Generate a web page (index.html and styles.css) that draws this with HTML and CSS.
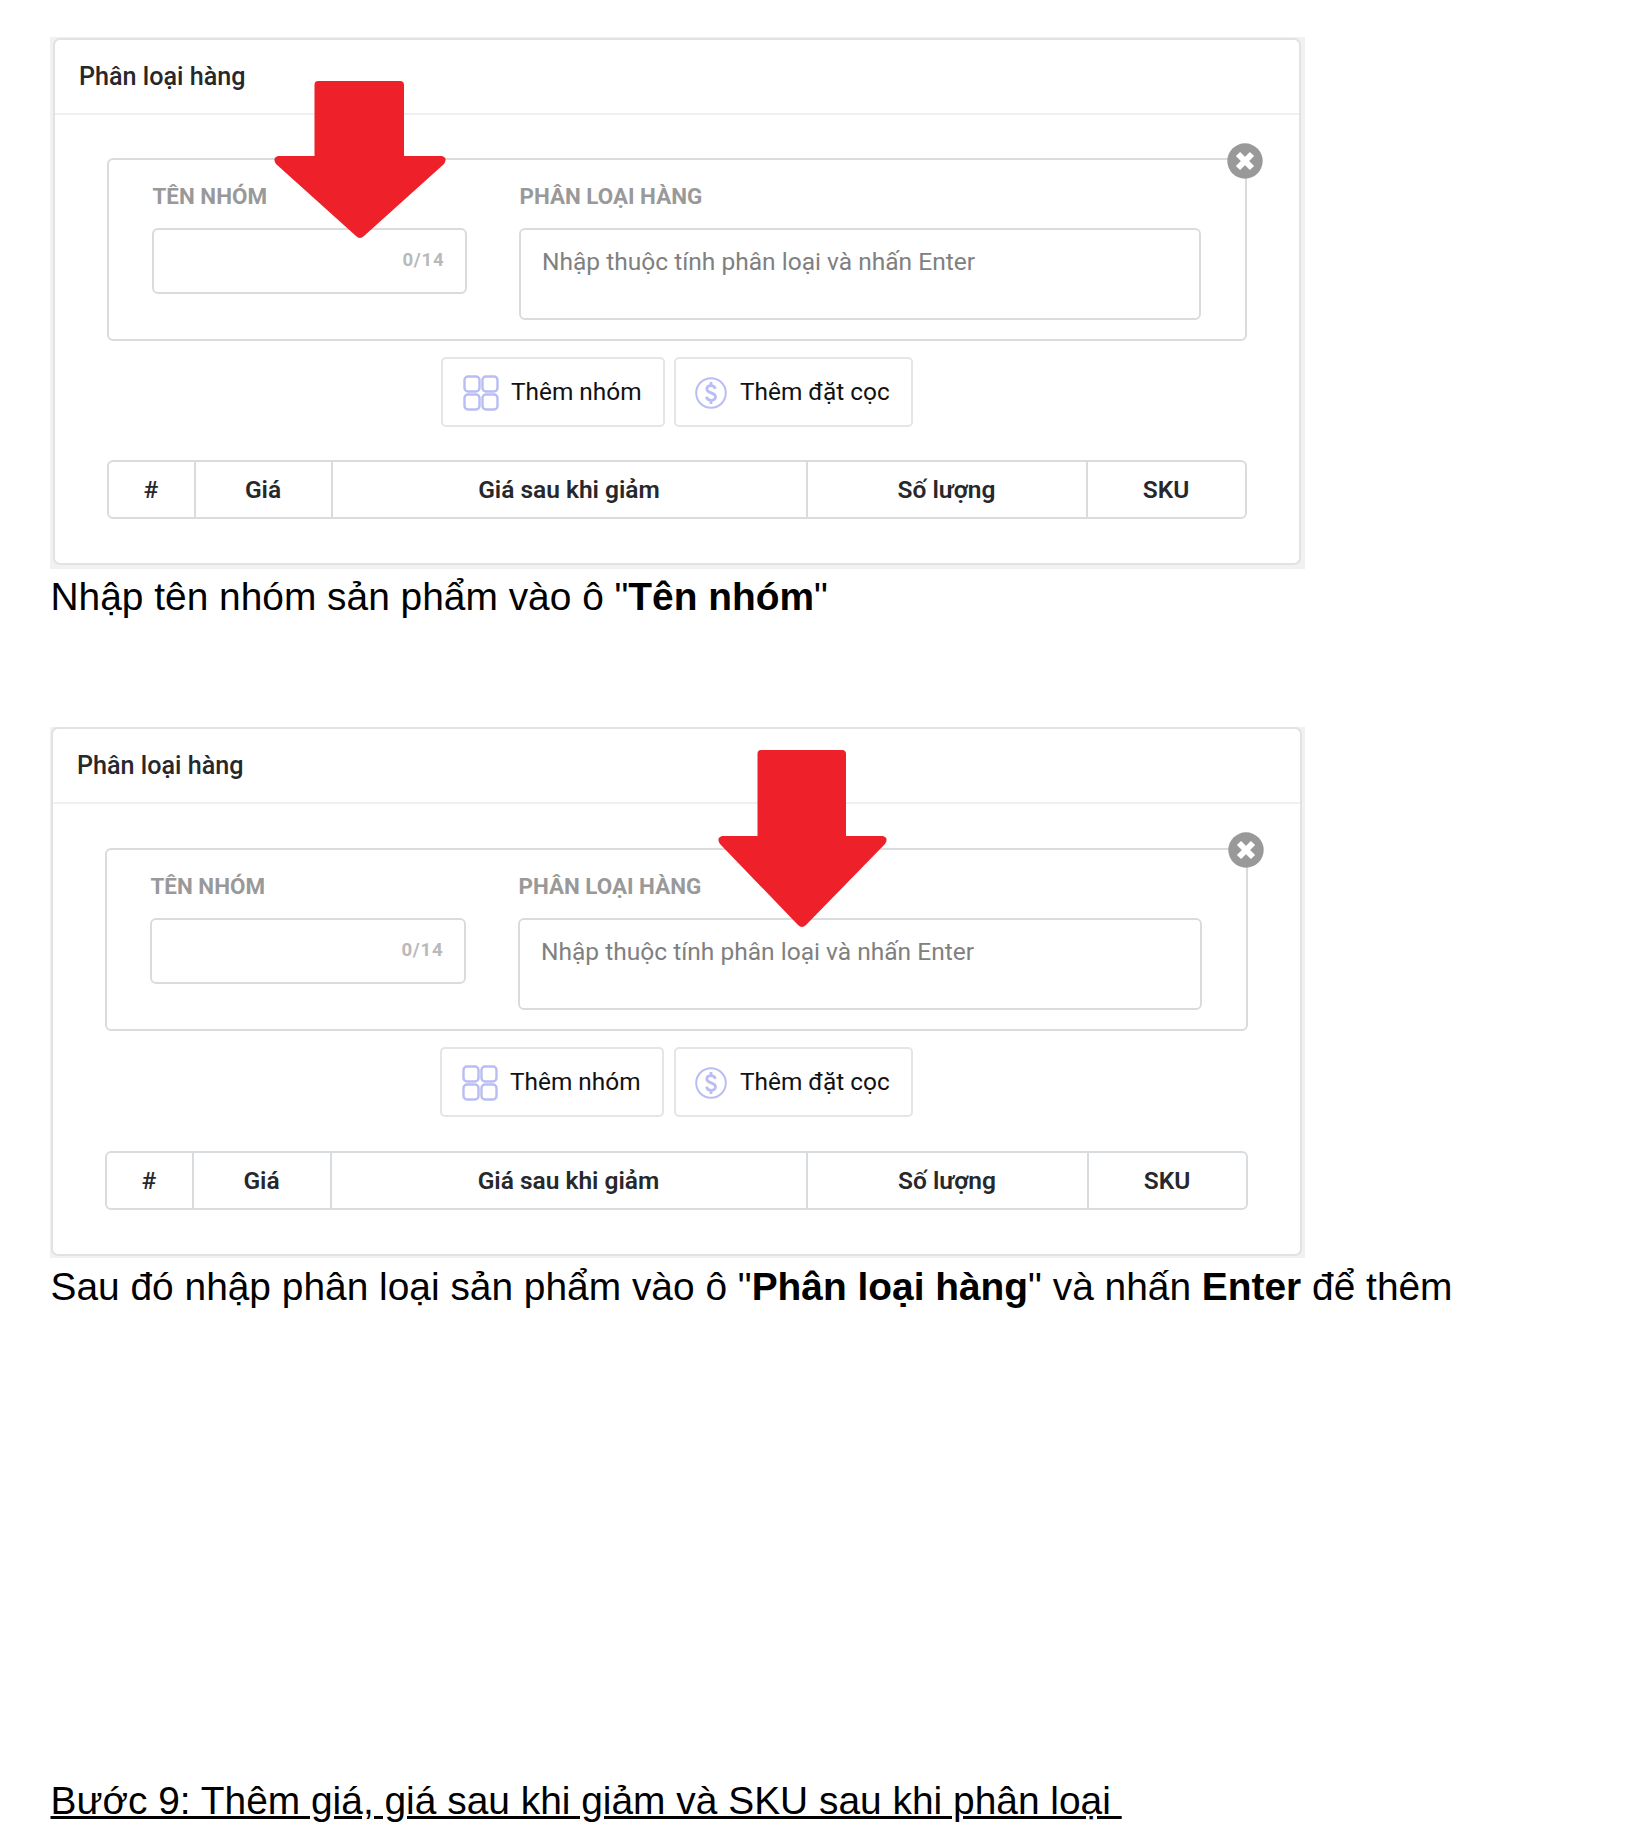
FILE: index.html
```html
<!DOCTYPE html>
<html lang="vi">
<head>
<meta charset="utf-8">
<title>Phân loại hàng</title>
<link rel="stylesheet" href="styles.css">
</head>
<body>
<main class="doc">
  <figure class="shot shot-name">
    <section class="card">
      <h2 class="card-title">Phân loại hàng</h2>
      <div class="card-body">
        <div class="group">
          <div class="field">
            <div class="label">TÊN NHÓM</div>
            <div class="input"><span class="count">0/14</span></div>
          </div>
          <div class="field">
            <div class="label">PHÂN LOẠI HÀNG</div>
            <div class="textarea">Nhập thuộc tính phân loại và nhấn Enter</div>
          </div>
          <svg class="close" viewBox="0 0 36 36"><circle cx="18" cy="18" r="17.7" fill="#999"/><path d="M11 11 25 25M25 11 11 25" stroke="#fff" stroke-width="6"/></svg>
        </div>
        <div class="actions">
          <div class="button"><svg class="icon-grid" viewBox="0 0 36 36"><g fill="none" stroke="#b9bdf3" stroke-width="2.4"><rect x="1.5" y="1.5" width="15" height="15" rx="3.5"/><rect x="19.5" y="1.5" width="15" height="15" rx="3.5"/><rect x="1.5" y="19.5" width="15" height="15" rx="3.5"/><rect x="19.5" y="19.5" width="15" height="15" rx="3.5"/></g></svg><span>Thêm nhóm</span></div>
          <div class="button"><svg class="icon-coin" viewBox="0 0 32 32"><g fill="none" stroke="#b9bdf3"><circle cx="16" cy="16" r="14.8" stroke-width="2"/><path d="M20.3 11.8C19.7 9.7 18.1 8.6 16 8.6c-2.5 0-4.2 1.4-4.2 3.5 0 4.9 8.7 2.7 8.7 7.7 0 2.2-1.9 3.6-4.4 3.6-2.4 0-4.2-1.3-4.6-3.6M16 5v3.8M16 23.2v3.8" stroke-width="2.8"/></g></svg><span>Thêm đặt cọc</span></div>
        </div>
        <div class="table">
          <div class="num">#</div><div>Giá</div><div>Giá sau khi giảm</div><div>Số lượng</div><div>SKU</div>
        </div>
      </div>
    </section>
    <svg class="arrow" viewBox="0 0 172 158" preserveAspectRatio="none"><path d="M44 0H126Q130 0 130 4V75H168Q174 77 170 83L90 155Q86 159 82 155L2 83Q-2 77 4 75H40.5V4Q40.5 0 44 0Z" fill="#ee212a"/></svg>
  </figure>
  <p class="caption">Nhập tên nhóm sản phẩm vào ô "<b>Tên nhóm</b>"</p>

  <figure class="shot shot-options">
    <section class="card">
      <h2 class="card-title">Phân loại hàng</h2>
      <div class="card-body">
        <div class="group">
          <div class="field">
            <div class="label">TÊN NHÓM</div>
            <div class="input"><span class="count">0/14</span></div>
          </div>
          <div class="field">
            <div class="label">PHÂN LOẠI HÀNG</div>
            <div class="textarea">Nhập thuộc tính phân loại và nhấn Enter</div>
          </div>
          <svg class="close" viewBox="0 0 36 36"><circle cx="18" cy="18" r="17.7" fill="#999"/><path d="M11 11 25 25M25 11 11 25" stroke="#fff" stroke-width="6"/></svg>
        </div>
        <div class="actions">
          <div class="button"><svg class="icon-grid" viewBox="0 0 36 36"><g fill="none" stroke="#b9bdf3" stroke-width="2.4"><rect x="1.5" y="1.5" width="15" height="15" rx="3.5"/><rect x="19.5" y="1.5" width="15" height="15" rx="3.5"/><rect x="1.5" y="19.5" width="15" height="15" rx="3.5"/><rect x="19.5" y="19.5" width="15" height="15" rx="3.5"/></g></svg><span>Thêm nhóm</span></div>
          <div class="button"><svg class="icon-coin" viewBox="0 0 32 32"><g fill="none" stroke="#b9bdf3"><circle cx="16" cy="16" r="14.8" stroke-width="2"/><path d="M20.3 11.8C19.7 9.7 18.1 8.6 16 8.6c-2.5 0-4.2 1.4-4.2 3.5 0 4.9 8.7 2.7 8.7 7.7 0 2.2-1.9 3.6-4.4 3.6-2.4 0-4.2-1.3-4.6-3.6M16 5v3.8M16 23.2v3.8" stroke-width="2.8"/></g></svg><span>Thêm đặt cọc</span></div>
        </div>
        <div class="table">
          <div class="num">#</div><div>Giá</div><div>Giá sau khi giảm</div><div>Số lượng</div><div>SKU</div>
        </div>
      </div>
    </section>
    <svg class="arrow" viewBox="0 0 169 178" preserveAspectRatio="none"><path d="M43 0H124Q128 0 128 4V86H165Q171 88 167 94L88 175Q84 179 80 175L2 94Q-2 88 4 86H39.5V4Q39.5 0 43 0Z" fill="#ee212a"/></svg>
  </figure>
  <p class="caption">Sau đó nhập phân loại sản phẩm vào ô "<b>Phân loại hàng</b>" và nhấn <b>Enter</b> để thêm</p>
  <h1 class="step">Bước 9: Thêm giá, giá sau khi giảm và SKU sau khi phân loại&nbsp;</h1>
</main>
</body>
</html>
```
FILE: styles.css
```css
* { box-sizing: border-box; }
body { margin: 0; background: #fff; color: #000; }

.doc {
  height: 1846px;
  overflow: hidden;
  padding: 37px 0 0 50px;
  font-family: "Liberation Sans", Arial, sans-serif;
}

.shot {
  position: relative;
  width: 1255px;
  margin: 0;
  background: #f1f1f1;
  font-family: Roboto, sans-serif;
}
.shot-name { height: 532px; padding: 1px 4px 4px 3px; }
.shot-options { height: 531px; padding: 0 3px 2px 1px; margin-top: 103px; }

.card {
  background: #fff;
  border: 2px solid #e2e2e2;
  border-radius: 7px;
}
.card-title {
  height: 75px;
  margin: 0;
  padding-left: 24px;
  border-bottom: 2px solid #eef0f2;
  font-size: 25.15px;
  font-weight: 500;
  line-height: 73px;
  color: #26282c;
}
.shot-name .card-body { padding: 43px 52px 44px; }
.shot-options .card-body { padding: 44px 52px 44px; }

.group {
  position: relative;
  display: grid;
  grid-template-columns: 315px 1fr;
  column-gap: 52px;
  height: 183px;
  padding: 24px 44px 0 43px;
  border: 2px solid #d9dcde;
  border-radius: 6px;
}
.shot-options .group { grid-template-columns: 316px 1fr; }
.label {
  height: 24px;
  margin-bottom: 20px;
  padding-left: 0.5px;
  font-size: 22.4px;
  font-weight: 700;
  line-height: 24px;
  color: #999;
}
.input, .textarea {
  border: 2px solid #d9dcde;
  border-radius: 6px;
}
.input {
  height: 66px;
  padding: 0 20.5px 3px 0;
  display: flex;
  align-items: center;
  justify-content: flex-end;
}
.count { font-size: 18.6px; font-weight: 700; color: #b9b9b9; letter-spacing: 0.8px; }
.textarea {
  height: 92px;
  padding: 18px 0 0 21px;
  font-size: 24.54px;
  line-height: 28px;
  color: #808080;
}
.close {
  position: absolute;
  top: -17.5px;
  right: -18px;
  width: 36px;
  height: 36px;
}
.shot-options .close { top: -18px; }

.actions {
  display: flex;
  justify-content: center;
  gap: 9px;
  margin-top: 16px;
}
.shot-options .actions { gap: 10px; }
.button {
  display: flex;
  align-items: center;
  height: 70px;
  border: 2px solid #e5e5e5;
  border-radius: 5px;
  font-size: 24.4px;
  color: #111;
}
.button span { padding-bottom: 2px; }
.button:first-child { width: 224px; padding-left: 20px; }
.button:last-child { width: 239px; padding-left: 19px; }
.icon-grid { width: 36px; height: 36px; margin: 2px 12px 0 0; }
.icon-coin { width: 32px; height: 32px; margin: 2px 13px 0 0; }

.table {
  display: grid;
  grid-template-columns: 85px 137px 475px 280px 1fr;
  height: 59px;
  margin-top: 33px;
  border: 2px solid #d9dcde;
  border-radius: 6px;
  font-size: 24.5px;
  font-weight: 600;
  line-height: 55px;
  text-align: center;
  color: #26282c;
}
.table > div + div { border-left: 2px solid #d9dcde; padding-right: 1px; }
.table .num { font-weight: 500; padding-right: 1px; }
.shot-options .table {
  grid-template-columns: 85px 138px 476px 281px 1fr;
  margin-top: 34px;
}

.arrow { position: absolute; }
.shot-name .arrow { left: 224px; top: 44px; width: 172px; height: 158px; }
.shot-options .arrow { left: 668px; top: 23px; width: 169px; height: 178px; }

.caption {
  margin: 0;
  padding-left: 0.5px;
  height: 55px;
  font-size: 38.88px;
  line-height: 55px;
  white-space: nowrap;
}
.shot-options + .caption { height: 58px; line-height: 57px; }
.step {
  margin: 457px 0 0;
  padding-left: 0.5px;
  font-size: 38.9px;
  font-weight: 400;
  line-height: 55px;
  text-decoration: underline;
  white-space: nowrap;
}
```
